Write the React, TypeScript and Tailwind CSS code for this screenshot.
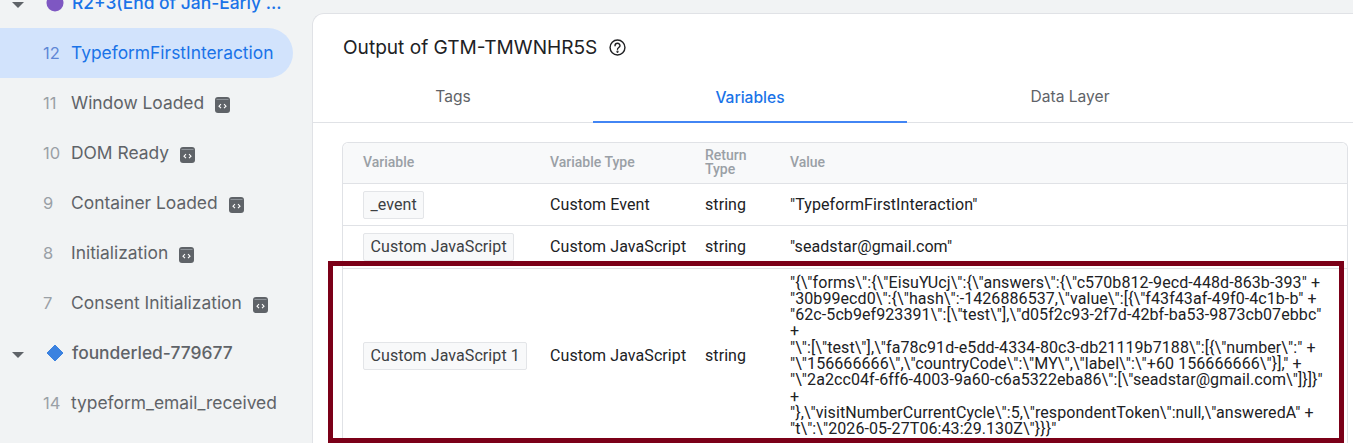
import React from "react";

function CodeBadge() {
  return (
    <svg width="15" height="16" viewBox="0 0 15 16" className="ml-[11px] mt-[4px] shrink-0">
      <rect x="0" y="0" width="15" height="16" rx="3" fill="#5f6368" />
      <path d="M1.5 2.5 h12" stroke="#9aa0a6" strokeWidth="0.8" />
      <path d="M6 7.2 L4 9.2 L6 11.2 M9 7.2 L11 9.2 L9 11.2" fill="none" stroke="#fff" strokeWidth="1.1" />
    </svg>
  );
}

function Caret() {
  return (
    <svg width="12" height="6" viewBox="0 0 12 6" className="mt-[4px] shrink-0">
      <path d="M0 0 H12 L6 6 Z" fill="#5f6368" />
    </svg>
  );
}

function EventRow({ n, label, badge, active }: { n: number; label: string; badge?: boolean; active?: boolean }) {
  return (
    <div
      className={`flex h-[50px] w-[293px] items-center rounded-r-[25px] pl-[43px] ${active ? "bg-[#d2e3fc]" : ""}`}
    >
      <span className={`w-[28px] shrink-0 text-[16.5px] ${active ? "text-[#5f87d6]" : "text-[#9aa0a6]"}`}>{n}</span>
      <span className={`whitespace-nowrap text-[17.4px] ${active ? "text-[#1a73e8]" : "text-[#5f6368]"}`}>{label}</span>
      {badge && <CodeBadge />}
    </div>
  );
}

function VarChip({ children }: { children: React.ReactNode }) {
  return (
    <span className="block w-fit whitespace-nowrap rounded-[2px] border border-[#e3e5e8] bg-[#f8f9fa] px-[6.5px] py-[4px] text-[16px] leading-[18px] tracking-[0.08px] text-[#3c4043]">
      {children}
    </span>
  );
}

const valueLines = [
  String.raw`"{\"forms\":{\"EisuYUcj\":{\"answers\":{\"c570b812-9ecd-448d-863b-393" +`,
  String.raw`"30b99ecd0\":{\"hash\":-1426886537,\"value\":[{\"f43f43af-49f0-4c1b-b" +`,
  String.raw`"62c-5cb9ef923391\":[\"test\"],\"d05f2c93-2f7d-42bf-ba53-9873cb07ebbc"`,
  String.raw`+`,
  String.raw`"\":[\"test\"],\"fa78c91d-e5dd-4334-80c3-db21119b7188\":[{\"number\":" +`,
  String.raw`"\"156666666\",\"countryCode\":\"MY\",\"label\":\"+60 156666666\"}]," +`,
  String.raw`"\"2a2cc04f-6ff6-4003-9a60-c6a5322eba86\":[\"seadstar@gmail.com\"]}]}"`,
  String.raw`+`,
  String.raw`"},\"visitNumberCurrentCycle\":5,\"respondentToken\":null,\"answeredA" +`,
  String.raw`"t\":\"2026-05-27T06:43:29.130Z\"}}}"`,
];

function Row({ name, type, value, h }: { name: string; type: string; value: React.ReactNode; h: string }) {
  return (
    <div className={`flex items-center border-t border-[#e0e2e6] tracking-[0.08px] ${h}`}>
      <div className="w-[207px] shrink-0 pl-[20px]">
        <VarChip>{name}</VarChip>
      </div>
      <div className="w-[155px] shrink-0 whitespace-nowrap">{type}</div>
      <div className="w-[85px] shrink-0">string</div>
      <div className="min-w-0 flex-1">{value}</div>
    </div>
  );
}

export default function App() {
  return (
    <div className="relative flex h-[443px] w-[1353px] overflow-hidden bg-[#f1f3f4] font-['Roboto',sans-serif]">
      <aside className="w-[312px] shrink-0 font-['Inter','Roboto',sans-serif]">
        <div className="-mt-[22px] flex h-[50px] items-center pl-[12px]">
          <Caret />
          <svg width="18" height="18" viewBox="0 0 18 18" className="ml-[22px] shrink-0">
            <circle cx="9" cy="9" r="8.5" fill="#7e57c2" />
          </svg>
          <span className="ml-[8px] whitespace-nowrap text-[17.4px] font-medium text-[#1a73e8]">R2+3(End of Jan-Early ...</span>
        </div>
        <EventRow n={12} label="TypeformFirstInteraction" active />
        <EventRow n={11} label="Window Loaded" badge />
        <EventRow n={10} label="DOM Ready" badge />
        <EventRow n={9} label="Container Loaded" badge />
        <EventRow n={8} label="Initialization" badge />
        <EventRow n={7} label="Consent Initialization" badge />
        <div className="flex h-[50px] items-center pl-[12px]">
          <Caret />
          <svg width="18" height="18" viewBox="0 0 18 18" className="ml-[22px] shrink-0">
            <path d="M9 1 L17 9 L9 17 L1 9 Z" fill="#3b82e0" stroke="#3b82e0" strokeLinejoin="round" />
          </svg>
          <span className="ml-[8px] whitespace-nowrap text-[17.4px] font-medium text-[#5f6368]">founderled-779677</span>
        </div>
        <EventRow n={14} label="typeform_email_received" />
      </aside>

      <main className="mt-[13px] min-w-0 flex-1 rounded-tl-[12px] border-l border-t border-[#e0e2e6] bg-white">
        <div className="flex h-[66px] items-center pl-[30px] font-['Inter','Roboto',sans-serif]">
          <span className="text-[19.1px] text-[#202124]">Output of GTM-TMWNHR5S</span>
          <svg width="17" height="17" viewBox="0 0 24 24" fill="none" stroke="#202124" strokeWidth="2" className="ml-[12px]">
            <circle cx="12" cy="12" r="10.5" />
            <path d="M8.5 9.5a3.5 3.5 0 0 1 7 0c0 2.5-3.5 2.6-3.5 5" strokeLinecap="round" />
            <circle cx="12" cy="18" r="0.6" fill="#202124" />
          </svg>
        </div>
        <div className="flex h-[43px] border-b border-[#e0e2e6] font-['Inter','Roboto',sans-serif] text-[15.6px]">
          <div className="flex w-[280px] items-center justify-center pb-[8px] text-[#5f6368]">Tags</div>
          <div className="-mb-px flex w-[314px] items-center justify-center border-b-2 border-[#4285f4] pb-[6px] font-medium text-[#1a73e8]">
            Variables
          </div>
          <div className="flex w-[326px] items-center justify-center pb-[8px] text-[#5f6368]">Data Layer</div>
        </div>

        <div className="ml-[29px] mr-[5px] mt-[19px] rounded-t-[6px] border-l border-r border-t border-[#e0e2e6] text-[16px] text-[#202124]">
          <div className="flex h-[40px] items-center rounded-t-[6px] bg-[#f8f9fa] pb-[2px] text-[14px] font-medium leading-[14px] text-[#9aa0a6]">
            <div className="w-[207px] shrink-0 pl-[20px]">Variable</div>
            <div className="w-[155px] shrink-0">Variable Type</div>
            <div className="w-[85px] shrink-0">
              Return
              <br />
              Type
            </div>
            <div>Value</div>
          </div>
          <Row name="_event" type="Custom Event" h="h-[42px]" value={<>"TypeformFirstInteraction"</>} />
          <Row name="Custom JavaScript" type="Custom JavaScript" h="h-[43px]" value={<>"seadstar@gmail.com"</>} />
          <Row
            name="Custom JavaScript 1"
            type="Custom JavaScript"
            h="h-[175px]"
            value={
              <div>
                {valueLines.map((l, i) => (
                  <div key={i} className="whitespace-nowrap leading-[16.3px]">
                    {l}
                  </div>
                ))}
              </div>
            }
          />
        </div>
      </main>

      <div className="pointer-events-none absolute left-[328px] top-[261px] h-[182px] w-[1016px] border-[5px] border-[#7b0018]" />
    </div>
  );
}
